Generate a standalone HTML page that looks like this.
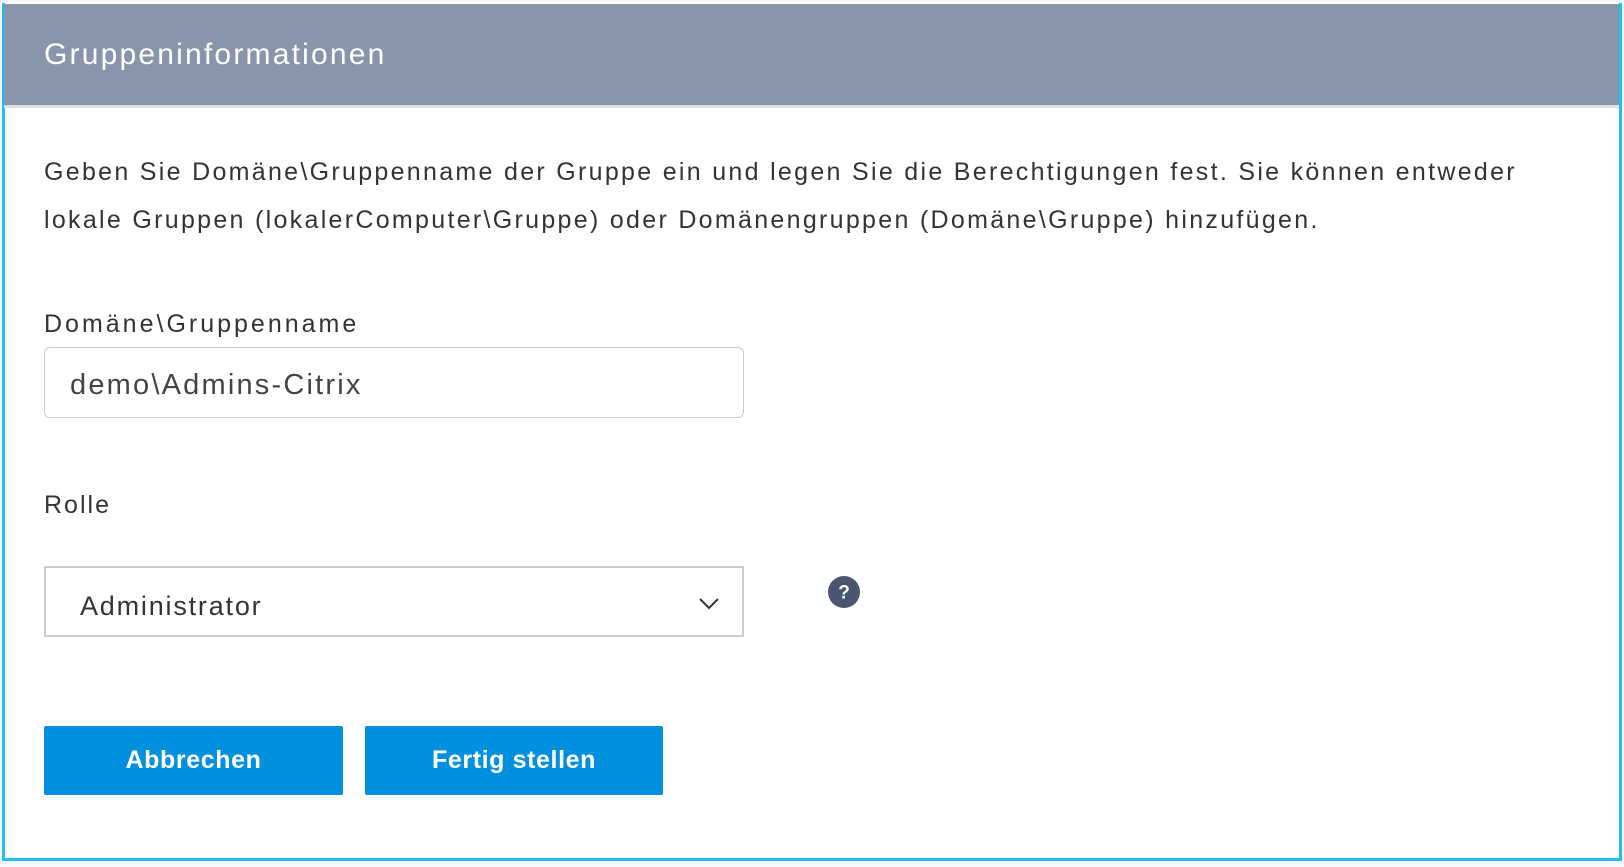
<!DOCTYPE html>
<html><head><style>
body{margin:0;width:1624px;height:867px;background:#f6f8fa;font-family:"Liberation Sans",sans-serif;position:relative;overflow:hidden}
.box{position:absolute;left:2px;top:3px;width:1614px;height:855px;border:3px solid #1fbfef;border-top:none;background:#fff}
.hdr{position:absolute;left:4px;top:4px;width:1615px;height:101px;background:#8995ab;border-bottom:3px solid #dde1e6}
.hdr span{position:absolute;left:40px;top:34px;color:#fff;font-size:30px;letter-spacing:2.2px}
.t{position:absolute;color:#333;font-size:25px;letter-spacing:2.3px;white-space:nowrap;line-height:30px}
.inp{position:absolute;left:44px;top:347px;width:698px;height:69px;border:1px solid #ccc;border-radius:6px}
.sel{position:absolute;left:44px;top:566px;width:700px;height:71px;border:2px solid #ccc;box-sizing:border-box}
.btn{position:absolute;top:726px;height:69px;background:#0090df;color:#fff;font-size:25px;font-weight:bold;letter-spacing:0.6px;text-align:center;line-height:69px;border-radius:2px}
</style></head><body>
<div class="box"></div>
<div class="hdr"><span>Gruppeninformationen</span></div>
<div class="t" style="left:44px;top:157px">Geben Sie Domäne\Gruppenname der Gruppe ein und legen Sie die Berechtigungen fest. Sie können entweder</div>
<div class="t" style="left:44px;top:205px">lokale Gruppen (lokalerComputer\Gruppe) oder Domänengruppen (Domäne\Gruppe) hinzufügen.</div>
<div class="t" style="left:44px;top:309px;letter-spacing:3px">Domäne\Gruppenname</div>
<div class="inp"></div>
<div class="t" style="left:70px;top:368px;font-size:29px;letter-spacing:2.2px;color:#444;line-height:34px">demo\Admins-Citrix</div>
<div class="t" style="left:44px;top:490px;letter-spacing:2px">Rolle</div>
<div class="sel"></div>
<div class="t" style="left:80px;top:590px;font-size:27px;letter-spacing:1.8px;line-height:32px">Administrator</div>
<svg style="position:absolute;left:698px;top:596px" width="22" height="14"><path d="M2 3l9 9 9-9" fill="none" stroke="#333" stroke-width="2"/></svg>
<svg style="position:absolute;left:827px;top:575px" width="34" height="34"><circle cx="17" cy="17" r="16" fill="#4a5570"/><text x="17" y="23.5" fill="#fff" font-size="19" font-weight="bold" text-anchor="middle" font-family="Liberation Sans">?</text></svg>
<div class="btn" style="left:44px;width:299px">Abbrechen</div>
<div class="btn" style="left:365px;width:298px">Fertig stellen</div>
</body></html>
